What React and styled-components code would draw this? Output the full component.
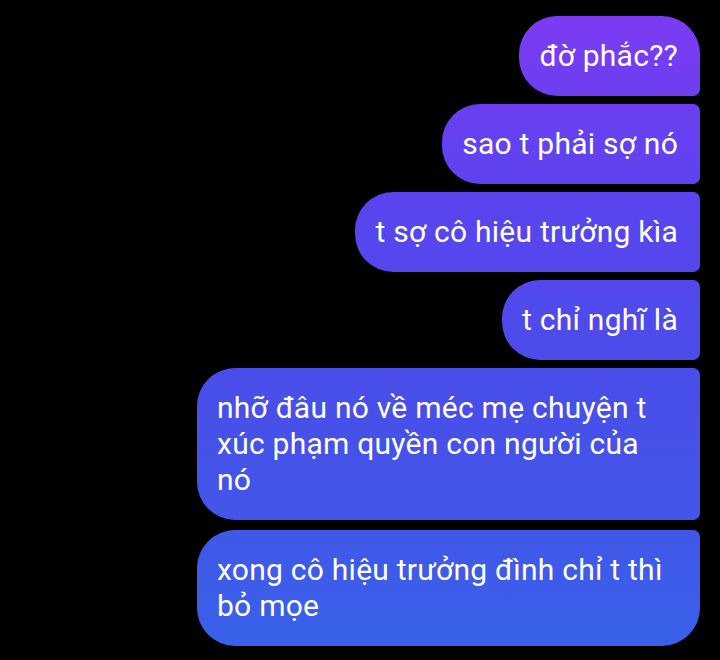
import React from 'react';
import styled, { createGlobalStyle } from 'styled-components';

const GlobalStyle = createGlobalStyle`
  html, body {
    margin: 0;
    padding: 0;
    background: #000;
  }
  body {
    font-family: Roboto, "Noto Sans", "Liberation Sans", sans-serif;
  }
`;

const Thread = styled.div`
  width: 720px;
  height: 660px;
  box-sizing: border-box;
  padding: 16px 20px 0 20px;
  display: flex;
  flex-direction: column;
  align-items: flex-end;
  gap: 8px;
  overflow: hidden;
  background: #000;
`;

const BIG = '38px';
const SMALL = '7px';

const Bubble = styled.div`
  max-width: 503px;
  box-sizing: border-box;
  padding: 22px 22px 22px 20px;
  color: #fff;
  font-size: 30px;
  line-height: 36px;
  letter-spacing: 0.25px;
  background: linear-gradient(180deg, #7f3af3 0%, #5a44ef 30%, #4a4de9 57%, #4256e8 77%, #3862ea 100%);
  background-attachment: fixed;
  border-radius: ${BIG} ${props => (props.first ? BIG : SMALL)}
    ${props => (props.last ? BIG : SMALL)} ${BIG};
  margin-top: ${props => props.spaced ? '2px' : '0'};
`;

const messages = [
  'đờ phắc??',
  'sao t phải sợ nó',
  't sợ cô hiệu trưởng kìa',
  't chỉ nghĩ là',
  'nhỡ đâu nó về méc mẹ chuyện t xúc phạm quyền con người của nó',
  'xong cô hiệu trưởng đình chỉ t thì bỏ mọe',
];

export default function App() {
  return (
    <>
      <GlobalStyle />
      <Thread>
        {messages.map((text, i) => (
          <Bubble
            key={i}
            first={i === 0}
            last={i === messages.length - 1}
            spaced={i === messages.length - 1}
          >
            {text}
          </Bubble>
        ))}
      </Thread>
    </>
  );
}
